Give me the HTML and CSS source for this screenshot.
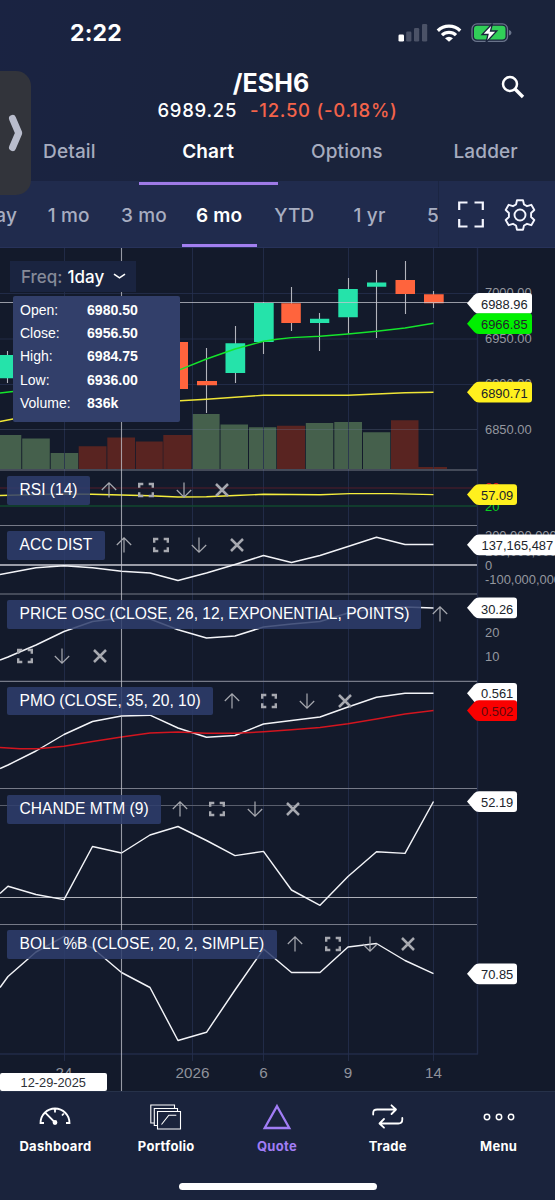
FILE: index.html
```html
<!DOCTYPE html>
<html lang="en">
<head>
<meta charset="utf-8">
<title>/ESH6 Chart</title>
<link rel="stylesheet" href="styles.css">
</head>
<body>
<svg width="0" height="0" class="defs">
  <defs>
    <symbol id="up" viewBox="0 0 16 16"><path d="M8 15.500V1M.8 8 8 .9 15.200 8" fill="none" stroke="currentColor" stroke-width="1.200"/></symbol>
    <symbol id="down" viewBox="0 0 16 16"><path d="M8 .5V15M.8 8 8 15.100 15.200 8" fill="none" stroke="currentColor" stroke-width="1.200"/></symbol>
    <symbol id="full" viewBox="0 0 16 16"><path d="M1.200 5.800V2H5.300M10.700 2h4.100v3.800M14.800 10.200V14h-4.100M5.300 14H1.200v-3.800" fill="none" stroke="currentColor" stroke-width="2.400"/></symbol>
    <symbol id="close" viewBox="0 0 16 16"><path d="M2 2 14 14M14 2 2 14" fill="none" stroke="currentColor" stroke-width="2.500"/></symbol>
  </defs>
</svg>
<div class="phone">
  <header class="header">
    <div class="status">
      <span class="time">2:22</span>
      <svg class="status-icons" width="116" height="22" viewBox="398 22 116 22">
        <rect x="399.500" y="34.500" width="5.500" height="7" rx="1.300" fill="#fff"/>
        <g fill="#4b5267"><rect x="407.200" y="31.500" width="5.200" height="10" rx="1.300"/><rect x="415" y="28" width="5.200" height="13.500" rx="1.300"/><rect x="423" y="24" width="5.200" height="17.500" rx="1.300"/></g>
        <g fill="none" stroke="#fff" stroke-width="3.300"><path d="M438.800 30.700a16 16 0 0 1 22.400 0"/><path d="M443 35.100a10.200 10.200 0 0 1 14 0"/></g>
        <path d="M446 38.200a6 6 0 0 1 8 0L450 41.800z" fill="#fff"/>
        <rect x="473" y="23.900" width="35.500" height="17.500" rx="5" fill="none" stroke="#69738a" stroke-width="1.300"/>
        <rect x="475" y="25.800" width="31.500" height="13.700" rx="3.300" fill="#31cf58"/>
        <path d="M510 30v5.500q2.500-.8 2.500-2.750T510 30z" fill="#69738a"/>
        <path d="M493.500 23.500 483 34.500h6l-2 8 10.800-11.500h-6.300z" fill="#fff" stroke="#1a233c" stroke-width="1.300"/>
      </svg>
    </div>
    <div class="quote">
      <div class="symbol">/ESH6</div>
      <div class="price"><span class="last">6989.25</span><span class="change">-12.50 (-0.18%)</span></div>
      <svg class="search" width="24" height="24" viewBox="0 0 24 24" fill="none" stroke="#fff"><circle cx="9" cy="9" r="7" stroke-width="2.500"/><path d="m14 14 8 8" stroke-width="3.300"/></svg>
    </div>
    <nav class="tabs">
      <span class="tab">Detail</span><span class="tab tab-active">Chart</span><span class="tab">Options</span><span class="tab">Ladder</span>
    </nav>
    <div class="drawer"><svg width="31" height="60" viewBox="0 0 31 60"><path d="m12.500 15.500 6.200 14.500-6.200 14.500" fill="none" stroke="#b9bdcd" stroke-width="7" stroke-linecap="round" stroke-linejoin="round"/></svg></div>
  </header>

  <div class="ranges">
    <div class="range-list">
      <span class="range">1 day</span><span class="range">1 mo</span><span class="range">3 mo</span><span class="range range-active">6 mo</span><span class="range">YTD</span><span class="range">1 yr</span><span class="range">5 yr</span>
    </div>
    <div class="range-tools">
      <svg width="26" height="27" viewBox="0 0 26 27" fill="none" stroke="#f4f6ff" stroke-width="2.200"><path d="M1.200 9V1.500H9.500M16.500 1.500h8.300V9M24.800 18v7.500h-8.300M9.500 25.500H1.200V18"/></svg>
      <svg width="32" height="32" viewBox="0 0 32 32" fill="none" stroke="#f4f6ff" stroke-width="1.900" stroke-linejoin="round"><circle cx="16" cy="16" r="5.500"/><path d="M13 1.200h6l1 4.300 3 1.700 4.300-1.400 3 5.200-3.200 3v4l3.200 3-3 5.200-4.300-1.400-3 1.700-1 4.300h-6l-1-4.300-3-1.700-4.300 1.400-3-5.200 3.200-3v-4l-3.200-3 3-5.200L9 7.200l3-1.700z"/></svg>
    </div>
  </div>

  <main class="chart">
    <svg class="plot" width="555" height="843" viewBox="0 248 555 843">
      <path fill="#45604c" d="M0 435h21.300v34H0zM22.200 438.500h27.600V469H22.200zM50.700 453h27.500v16H50.700zM192.300 414h27.300v55h-27.300zM220.500 424.500H248V469h-27.500zM249 427.200h27.300V469H249zM305.800 423h27.500v46h-27.500zM334.300 422h27.700v47h-27.700zM363 432.300h27.300V469H363z"/>
      <path fill="#592421" d="M78.700 446.200h27.800V469H78.700zM107.300 437.500H135V469h-27.700zM135.800 441.500h27V469h-27zM163.300 435h28.200v34h-28.200zM277 425.700h28V469h-28zM391 420.200h27.500V469H391zM418.500 467h28.500v2h-28.500z"/>
      <g stroke="#25304f" stroke-opacity=".8">
        <path d="M0 293.500h477M0 339h477M0 384.500h477M64.500 248v813M192.500 248v813M263.500 248v813M348.500 248v813M433.500 248v813"/>
        <path d="M477.500 248v806.500M0 1054h478" stroke-width="1.400"/>
      </g>
      <path stroke="#7482a0" stroke-opacity=".27" d="M0 429.500h477"/>
      <path stroke="#767a88" stroke-width="1.200" d="M0 470h477M0 525.500h477M0 594h477M0 681.300h477M0 788.500h477M0 924.500h477"/>
      <path stroke="#551c2b" d="M0 488h477"/><path stroke="#12482f" stroke-width="1.300" d="M0 506h477"/>
      <path stroke="#9a9ca7" stroke-width="1.800" d="M0 565h477"/>
      <path stroke="#595e6c" d="M0 805.500h477"/><path stroke="#aeb0b8" d="M0 897.500h477"/>
      <g stroke="#b2b4bc" stroke-width="1.100">
        <path d="M7.500 351v32M206.500 348v65M235.500 326v57M263.500 302v52M291.500 287v44M319.500 313v38M348.500 278v56M376.500 270v68M405.500 261v53M433.500 291v17"/>
      </g>
      <path fill="#25e3aa" d="M0 355h17.500v23.300H0zM225.500 343.300h19.700v29.700h-19.700zM254 303h19.700v39H254zM310 318.700h19.300v4.200H310zM338.300 289h19.500v28.200h-19.500zM367 282.500h19.300v4.200H367z"/>
      <path fill="#ff643d" d="M168 342h20v47h-20zM197 381h20v4.300h-20zM281.300 303.200h19.500V323h-19.500zM395.500 280h19.500v14h-19.500zM424 294.200h19.700v9H424z"/>
      <g fill="none" stroke-width="1.400" stroke-linejoin="round">
        <path stroke="#14e52c" d="M0 393 13 391.500C60 387 130 387 180 369.700L206.500 359 235 349 263.500 341.300 277 339.300 291.500 337.600 320 336.300 348 334 376.500 331.200 405 328 433.500 323.200"/>
        <path stroke="#efe536" d="M0 421.500 13 419 180 400.700 206.500 399.200 263.500 395.200 348 395.200 405 392.800 433.500 392.200"/>
        <path stroke="#f5ee3d" d="M0 495.500 60 494 92 494.200 121 495 150 495.700 178 497 206.500 496.700 235 495.500 263.500 494.300 320 494.700 350 493.600 390 493.600 433.500 494.600"/>
      </g>
      <g fill="none" stroke="#f3f4f8" stroke-width="1.450" stroke-linejoin="round">
        <path d="M0 574.500 36 567.700 64 565.700 92.500 567.700 121.500 571.300 150 573 178 580.500 206.500 573 235 564.500 263.500 555.500 291.500 562.500 320 555.500 348 546.500 376.500 537.300 405 544.500H433.500"/>
        <path d="M0 660 8 657 36 645 64 631.500 92.500 621.500 121.500 618 150 619 178 629.700 206.500 638 235 636 263.500 627 291.500 624 320 621.500 348 613 376.500 608 405 607 433.500 608"/>
        <path d="M0 768.500 8 765 36 751 64 734.500 92.500 721.500 121.500 716 150 715.200 178 728 206.500 737.300 235 735.500 263.500 724 291.500 720.500 320 717 348 707 376.500 697.300 405 693.200H433.500"/>
        <path d="M0 893.500 8 886.300 36 894.500 64 899.600 92.500 846.500 121.500 853 150 835 178 826.500 206.500 840.500 235 855.600 263.500 851.400 291.500 890 320 905.300 348 876.500 376.500 851.800 405 853.400 433.500 801.500"/>
        <path d="M0 987.500 8 976.500 36 952 64 936.300 92.500 948 121.500 972.500 150 987.500 178 1040.500 206.500 1032.300 235 990 263.500 949 291.500 972.500H320L348 947 376.500 943.500 405 960.500 433.500 973.700"/>
      </g>
      <path fill="none" stroke="#d3151f" stroke-width="1.400" d="M0 747.500 20 748.700H38L64 746.300 92.500 741.500 121.500 737 150 733 178 732 206.500 733.200 235 733.300 263.500 731.800 291.500 729.800 320 727.500 348 723.700 376.500 719 405 714 433.500 710.500"/>
      <path stroke="#c4c6cf" stroke-opacity=".75" stroke-width="1.100" d="M0 302.500h470M121.500 248v843"/>
      <g class="axis">
        <text x="485" y="297.400">7000.00</text><text x="485" y="343.300">6950.00</text><text x="485" y="387.700">6900.00</text><text x="485" y="434">6850.00</text>
        <text x="485" y="491.500" class="high">80</text><text x="485" y="510.700" class="low">20</text>
        <text x="485" y="540">200,000,000</text><text x="485" y="555.500">100,000,000</text><text x="485" y="570">0</text><text x="485" y="584.200">-100,000,000</text>
        <text x="485" y="637.300">20</text><text x="485" y="660.700">10</text>
      </g>
      <g class="dates"><text x="64" y="1078">24</text><text x="192.500" y="1078">2026</text><text x="263.500" y="1078">6</text><text x="348" y="1078">9</text><text x="433.500" y="1078">14</text></g>
      <g class="tags">
        <path d="M467 303.300 474 295.200Q476 292.900 479 292.900H529Q532 292.900 532 295.900V310.700Q532 313.700 529 313.700H479Q476 313.700 474 311.400Z" fill="#fff"/><text x="481" y="309">6988.96</text>
        <path d="M467 323.700 474 315.600Q476 313.300 479 313.300H529Q532 313.300 532 316.300V331.100Q532 334.100 529 334.100H479Q476 334.100 474 331.800Z" fill="#00f000"/><text x="481" y="329">6966.85</text>
        <path d="M467 392.200 474 384.100Q476 381.800 479 381.800H529Q532 381.800 532 384.800V399.600Q532 402.600 529 402.600H479Q476 402.600 474 400.300Z" fill="#fff01e"/><text x="481" y="397.500">6890.71</text>
        <path d="M467 494.600 474 486.500Q476 484.200 479 484.200H514Q517 484.200 517 487.200V502Q517 505 514 505H479Q476 505 474 502.700Z" fill="#fff01e"/><text x="481" y="500.300">57.09</text>
        <path d="M467 544.800 474 536.700Q476 534.400 479 534.400H555V555.200H479Q476 555.200 474 552.900Z" fill="#fff"/><text x="481.500" y="550">137,165,487</text>
        <path d="M467 607.800 474 599.700Q476 597.400 479 597.400H514Q517 597.400 517 600.400V615.200Q517 618.200 514 618.200H479Q476 618.200 474 615.900Z" fill="#fff"/><text x="481" y="613.600">30.26</text>
        <path d="M467 693.300 474 685.200Q476 682.900 479 682.900H514Q517 682.900 517 685.900V700.700Q517 703.700 514 703.700H479Q476 703.700 474 701.400Z" fill="#fff"/><text x="481" y="698.300">0.561</text>
        <path d="M467 710.600 474 702.500Q476 700.200 479 700.200H514Q517 700.200 517 703.200V718Q517 721 514 721H479Q476 721 474 718.700Z" fill="#fa0000"/><text x="481" y="716" class="on-red">0.502</text>
        <path d="M467 801.600 474 793.500Q476 791.200 479 791.200H514Q517 791.200 517 794.200V809Q517 812 514 812H479Q476 812 474 809.700Z" fill="#fff"/><text x="481" y="807">52.19</text>
        <path d="M467 973.800 474 965.700Q476 963.400 479 963.400H514Q517 963.400 517 966.400V981.200Q517 984.200 514 984.200H479Q476 984.200 474 981.900Z" fill="#fff"/><text x="481" y="979.300">70.85</text>
      </g>
    </svg>
    <div class="overlay">
      <section class="pane pane-price">
        <div class="freq"><span class="freq-key">Freq:</span><span>1day</span><svg width="13" height="7" viewBox="0 0 13 7"><path d="m1 1.200 5.500 3.600L12 1.200" fill="none" stroke="#fff" stroke-width="1.600"/></svg></div>
        <dl class="tooltip"><dt>Open:</dt><dd>6980.50</dd><dt>Close:</dt><dd>6956.50</dd><dt>High:</dt><dd>6984.75</dd><dt>Low:</dt><dd>6936.00</dd><dt>Volume:</dt><dd>836k</dd></dl>
      </section>
      <section class="pane"><span class="study rsi">RSI (14)</span><i class="tool"><svg><use href="#up"/></svg></i><i class="tool"><svg><use href="#full"/></svg></i><i class="tool"><svg><use href="#down"/></svg></i><i class="tool"><svg><use href="#close"/></svg></i></section>
      <section class="pane"><span class="study acc">ACC DIST</span><i class="tool"><svg><use href="#up"/></svg></i><i class="tool"><svg><use href="#full"/></svg></i><i class="tool"><svg><use href="#down"/></svg></i><i class="tool"><svg><use href="#close"/></svg></i></section>
      <section class="pane"><span class="study osc">PRICE OSC (CLOSE, 26, 12, EXPONENTIAL, POINTS)</span><i class="tool"><svg><use href="#up"/></svg></i><i class="tool"><svg><use href="#full"/></svg></i><i class="tool"><svg><use href="#down"/></svg></i><i class="tool"><svg><use href="#close"/></svg></i></section>
      <section class="pane"><span class="study pmo">PMO (CLOSE, 35, 20, 10)</span><i class="tool"><svg><use href="#up"/></svg></i><i class="tool"><svg><use href="#full"/></svg></i><i class="tool"><svg><use href="#down"/></svg></i><i class="tool"><svg><use href="#close"/></svg></i></section>
      <section class="pane"><span class="study mtm">CHANDE MTM (9)</span><i class="tool"><svg><use href="#up"/></svg></i><i class="tool"><svg><use href="#full"/></svg></i><i class="tool"><svg><use href="#down"/></svg></i><i class="tool"><svg><use href="#close"/></svg></i></section>
      <section class="pane"><span class="study boll">BOLL %B (CLOSE, 20, 2, SIMPLE)</span><i class="tool"><svg><use href="#up"/></svg></i><i class="tool"><svg><use href="#full"/></svg></i><i class="tool"><svg><use href="#down"/></svg></i><i class="tool"><svg><use href="#close"/></svg></i></section>
    </div>
    <div class="cursor-date">12-29-2025</div>
  </main>

  <footer class="footer">
    <nav class="menu">
      <a class="item"><svg width="34" height="28" viewBox="0 0 34 28" fill="none" stroke="#fff" stroke-width="1.800"><path d="M6 20H2.500a14.500 14.500 0 1 1 29 0H28M17 5v4.500M25.800 10.500 24 12.500M17 19.500 6.700 9.200"/><circle cx="17" cy="19.500" r="1.500" fill="#fff"/></svg>Dashboard</a>
      <a class="item"><svg width="34" height="28" viewBox="0 0 34 28" fill="none" stroke="#fff" stroke-width="1.100"><path d="M8.500 8.500h23v17.500h-23zM8.500 22.500h-3.200V5.500h23.200v3M5.300 20H1.800V2h23.700v3.500M12.500 21.500l7.300-9.300h7.500"/></svg>Portfolio</a>
      <a class="item item-active"><svg width="34" height="28" viewBox="0 0 34 28" fill="none" stroke="#a17df5" stroke-width="2.300"><path d="M17 3.200 29.300 25H4.700z"/></svg>Quote</a>
      <a class="item"><svg width="34" height="28" viewBox="0 0 34 28" fill="none" stroke="#fff" stroke-width="1.800" stroke-linecap="round" stroke-linejoin="round"><path d="M2.200 11.500V10q0-3.500 4-3.500h18.500M20.500 2.300l4.500 4.200-4.500 4.500M31.300 15v1.500q0 4-4 4H9M13 16l-4.500 4.500L13 24.700"/></svg>Trade</a>
      <a class="item"><svg width="34" height="28" viewBox="0 0 34 28" fill="none" stroke="#fff" stroke-width="1.500"><circle cx="5" cy="14" r="2.700"/><circle cx="17" cy="14" r="2.700"/><circle cx="29" cy="14" r="2.700"/></svg>Menu</a>
    </nav>
    <div class="home"></div>
  </footer>
</div>
</body>
</html>
```
FILE: styles.css
```css
* { box-sizing: border-box; }
body { margin: 0; background: #141a2b; }
.defs { position: absolute; }
.phone { width: 555px; height: 1200px; display: flex; flex-direction: column; overflow: hidden; font-family: Inter, sans-serif; color: #fff; background: #131a2b; }

.header { position: relative; height: 181px; background: linear-gradient(100deg, #1a2342, #1a233b 55%); display: flex; flex-direction: column; }
.status { height: 66px; padding: 1px 42px 0 70px; display: flex; justify-content: space-between; align-items: center; }
.time { font-size: 23px; font-weight: 700; padding-top: 1px; letter-spacing: .2px; }
.quote { position: relative; height: 57px; padding-top: 2px; text-align: center; }
.symbol { font-size: 25px; line-height: 32px; font-weight: 700; padding-right: 13px; letter-spacing: .1px; margin-top: 1px; }
.price { display: flex; justify-content: center; gap: 13px; font-size: 18.500px; line-height: 23px; font-weight: 500; letter-spacing: .72px; }
.change { color: #f4634a; }
.search { position: absolute; left: 501px; top: 11px; }
.tabs { display: grid; grid-template-columns: repeat(4, 1fr); height: 60px; position: relative; z-index: 1; }
.tab { text-align: center; line-height: 61px; font-size: 19px; font-weight: 500; letter-spacing: .15px; color: #a6acbf; }
.tab-active { color: #fff; font-weight: 600; border-bottom: 3px solid #9e7ae6; }
.drawer { position: absolute; left: 0; top: 71px; width: 31px; height: 124px; border-radius: 0 15px 15px 0; background: #32343b; display: flex; align-items: center; z-index: 2; }

.ranges { height: 67px; display: flex; background: #202b4d; border-bottom: 1px solid #27325a; }
.range-list { width: 439px; overflow: hidden; display: flex; border-right: 1px solid #1b2542; }
.range { flex: 0 0 75.200px; text-align: center; line-height: 70px; font-size: 19px; font-weight: 500; letter-spacing: .15px; color: #a8aec1; }
.range:first-child { margin-left: -44px; }
.range-active { color: #fff; font-weight: 600; border-bottom: 3px solid #a27ff0; }
.range-tools { flex: 1; display: flex; align-items: center; gap: 20px; padding: 1px 0 0 19px; }

.chart { position: relative; height: 843px; background: #131a2b; }
.plot { display: block; }
.axis text, .tags text { font: 12.900px "Liberation Sans", sans-serif; fill: #94979f; }
.axis .high { fill: #e00d1d; }
.axis .low { fill: #08d020; }
.tags text { fill: #20242b; }
.tags .on-red { fill: #5d090d; }
.dates text { font: 15.200px "Liberation Sans", sans-serif; fill: #8f929b; text-anchor: middle; }
.overlay { position: absolute; inset: 0; display: grid; grid-template-rows: 222px 55px 69px 86.500px 108.500px 135px 166px; }
.pane { display: flex; flex-wrap: wrap; align-content: flex-start; align-items: center; row-gap: 19px; padding: 6px 95px 0 6px; min-height: 0; }
.pane-price { display: block; padding: 13px 0 0; }
.freq { width: 126px; height: 31px; margin-left: 10px; padding-left: 11px; display: flex; align-items: center; gap: 5px; background: #1a2440; font-size: 17px; font-weight: 500; }
.freq svg { margin-left: 4px; }
.freq-key { color: #868a98; }
.tooltip { width: 167px; height: 126px; margin: 4px 0 0 13px; padding: 2px 0 0 7px; border-radius: 2px; background: #323f6a; display: grid; grid-template-columns: 67px 1fr; grid-auto-rows: 23.400px; align-items: center; font: 14px "Liberation Sans", sans-serif; }
.tooltip dd { margin: 0; font-weight: 700; font-size: 14.100px; }
.study { height: 28.500px; margin-left: 1px; padding-left: 12.500px; border-radius: 2px; background: rgba(47,62,108,.86); font: 15.600px/28px "Liberation Sans", sans-serif; white-space: nowrap; }
.rsi { width: 83px; }
.acc { width: 98px; }
.osc { width: 414px; }
.pmo { width: 206px; }
.mtm { width: 154px; }
.boll { width: 269.500px; }
.tool { width: 37.600px; height: 16px; display: flex; justify-content: center; color: #a7a9b0; }
.tool svg { width: 16px; height: 16px; }
.cursor-date { position: absolute; left: 0; bottom: 0; width: 106.500px; height: 18px; border-radius: 2px; background: #fff; color: #2d3037; font: 12.800px/19px "Liberation Sans", sans-serif; text-align: center; }

.footer { height: 109px; background: #1a233c; border-top: 1px solid #263149; display: flex; flex-direction: column; align-items: center; }
.menu { width: 555px; height: 91px; display: grid; grid-template-columns: repeat(5, 1fr); padding: 11px 1px 0 0; }
.item { display: flex; flex-direction: column; align-items: center; gap: 6px; font-size: 13px; line-height: 18px; font-weight: 700; letter-spacing: .3px; }
.item-active { color: #a17df5; }
.home { width: 198px; height: 7px; border-radius: 4px; background: #fff; }
```
